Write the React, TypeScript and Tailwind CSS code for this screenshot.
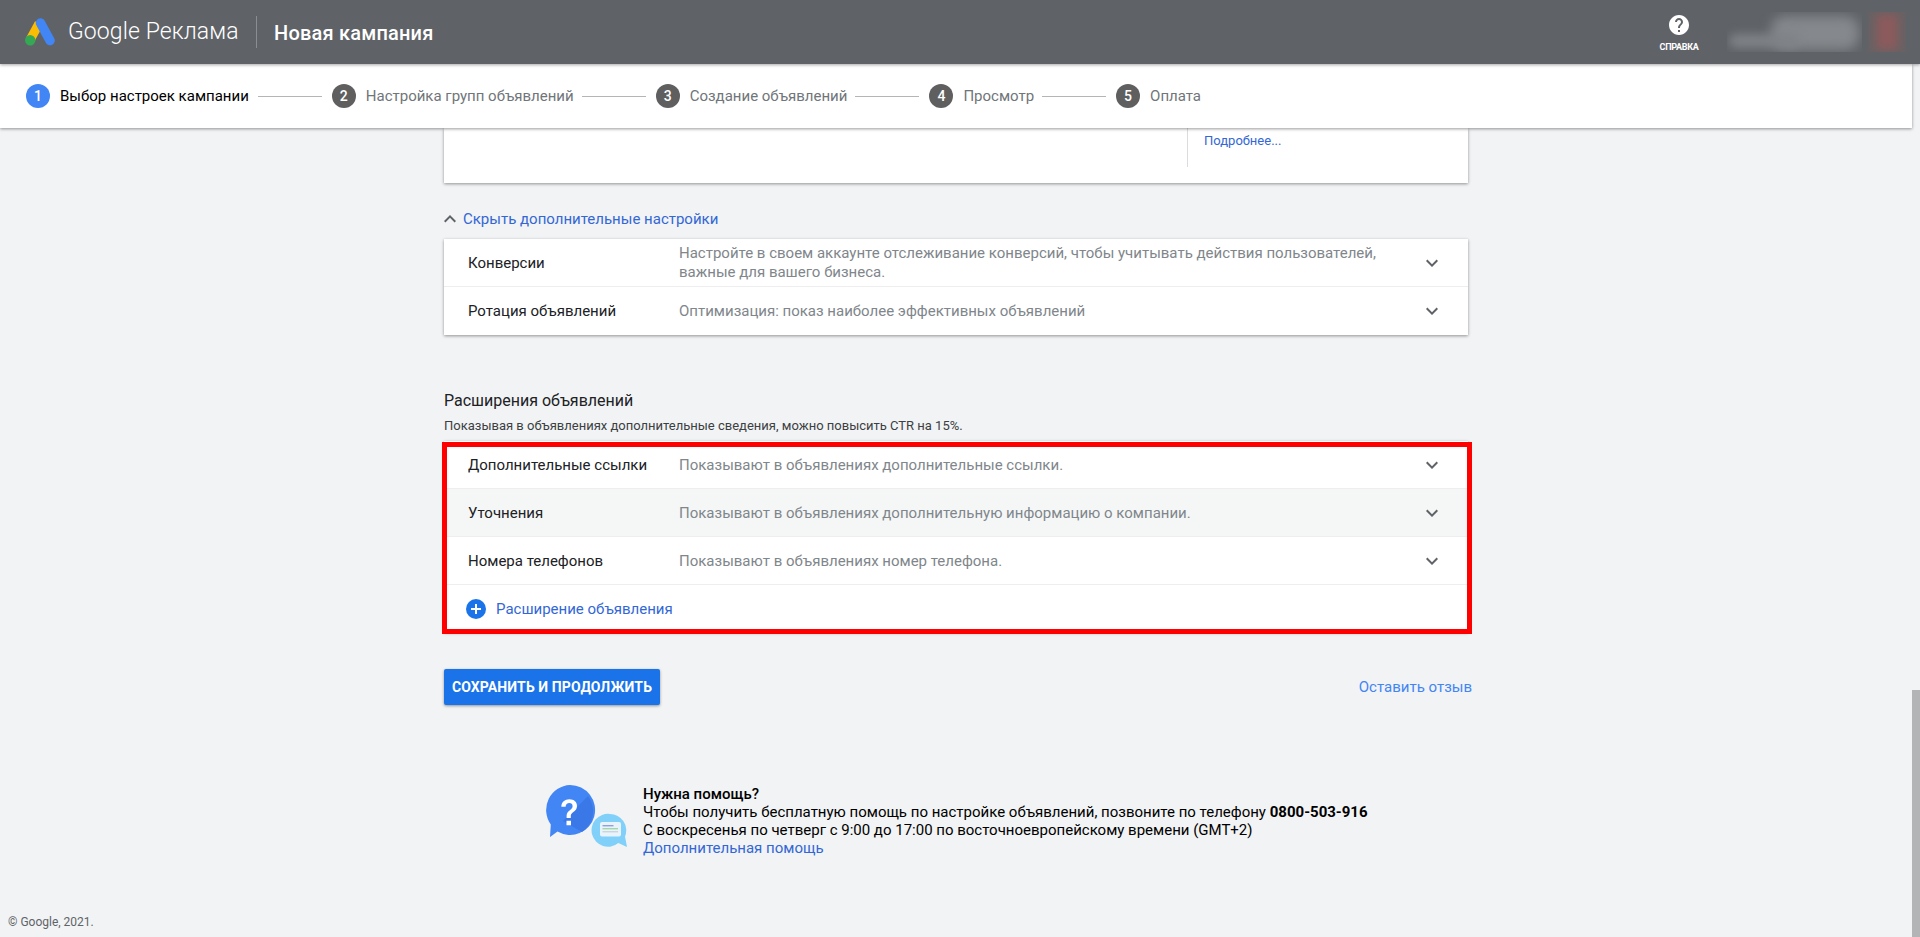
import React from "react";

const font = { fontFamily: "Roboto, 'Noto Sans', sans-serif" };

function ChevronDown() {
  return (
    <svg width="24" height="24" viewBox="0 0 24 24" className="shrink-0 fill-[#5f6368]">
      <path d="M16.59 8.59L12 13.17 7.41 8.59 6 10l6 6 6-6z" />
    </svg>
  );
}

function Row({ label, desc, hover, last }: { label: string; desc: React.ReactNode; hover?: boolean; last?: boolean }) {
  return (
    <div className={`flex h-[48px] items-center pl-6 pr-6 border-b ${last ? "border-transparent" : "border-[#eeeeee]"} ${hover ? "bg-[#f5f7f7]" : "bg-white"}`}>
      <div className="w-[211px] shrink-0 pt-px text-[15px] text-[#202124]">{label}</div>
      <div className="flex-1 pt-px text-[15px] leading-[19px] text-[#80868b]">{desc}</div>
      <ChevronDown />
    </div>
  );
}

function Step({ n, label, active, line, tight }: { n: number; label: string; active?: boolean; line?: boolean; tight?: boolean }) {
  return (
    <div className="flex items-center">
      <div className={`flex h-6 w-6 items-center justify-center rounded-full text-[14px] font-medium text-white ${active ? "bg-[#4285f4]" : "bg-[#5f5f5f]"}`}>{n}</div>
      <div className={`ml-[10px] whitespace-nowrap text-[15px] ${active ? "text-[#000000]" : "text-[#70757a]"}`}>{label}</div>
      {line && <div className={`mr-[10px] h-px w-16 bg-[#b5b5b5] ${tight ? "ml-[8px]" : "ml-[9px]"}`} />}
    </div>
  );
}

function Logo() {
  return (
    <svg width="30" height="28" viewBox="0 0 30 28" className="shrink-0">
      <path d="M14 5.5 L5 22" stroke="#fbbc04" strokeWidth="9" fill="none" />
      <path d="M15.5 5 L25 22.5" stroke="#4285f4" strokeWidth="9.5" strokeLinecap="round" fill="none" />
      <circle cx="5.2" cy="22.2" r="5.2" fill="#34a853" />
    </svg>
  );
}

function HelpArt() {
  return (
    <svg width="84" height="64" viewBox="0 0 84 64" className="shrink-0">
      <path d="M26 1a25 25 0 1 1-12.5 46.6L6 53l.8-12.5A25 25 0 0 1 26 1z" fill="#4285f4" />
      <path d="M19 37 L44 12 A25 25 0 0 1 38 48z" fill="#3b78e7" />
      <path d="M26.8 34h-4.2v-2.2c0-2.4 1-4 3.2-5.6 1.9-1.4 2.8-2.4 2.8-4 0-1.9-1.3-3.1-3.3-3.1-2.2 0-3.5 1.4-3.7 3.6h-4.3c.2-4.6 3.4-7.4 8.1-7.4 4.7 0 7.6 2.8 7.6 6.6 0 2.7-1.3 4.4-3.6 6.1-1.9 1.4-2.6 2.3-2.6 4zM22.5 36.8h4.5v4.4h-4.5z" fill="#fff" />
      <path d="M66 30a16.4 16.4 0 0 1 15 22.6l2 10.4-8.7-4A16.4 16.4 0 1 1 66 30z" fill="#81d0f9" />
      <rect x="56" y="38" width="21" height="14.5" rx="2" fill="#e8f3fb" />
      <rect x="58.5" y="41" width="11" height="1.4" fill="#8f9fe0" />
      <rect x="58.5" y="44" width="15.5" height="1.4" fill="#a3d6a8" />
      <rect x="58.5" y="47" width="15.5" height="1.4" fill="#c9d4dc" />
    </svg>
  );
}

export default function App() {
  return (
    <div className="flex h-[937px] w-[1920px] flex-col overflow-hidden bg-[#f1f3f4]" style={font}>
      <header className="relative z-20 flex h-16 shrink-0 items-center bg-[#5f6368] pl-[25px] shadow-[0_1px_3px_rgba(0,0,0,0.35)]">
        <Logo />
        <div className="ml-[13px] w-[188px] whitespace-nowrap pt-px text-[23px] font-light tracking-[0.1px] text-white">Google Реклама</div>
        <div className="h-8 w-px bg-[#8a8d91]" />
        <div className="ml-[17px] whitespace-nowrap pt-px text-[20px] font-medium tracking-[0.2px] text-white">Новая кампания</div>
        <div className="ml-auto flex w-[38px] flex-col items-center pt-[2px]">
          <svg width="24" height="24" viewBox="0 0 24 24" className="fill-white">
            <path d="M12 2C6.48 2 2 6.48 2 12s4.48 10 10 10 10-4.48 10-10S17.52 2 12 2zm1 17h-2v-2h2v2zm2.07-7.75l-.9.92C13.45 12.9 13 13.5 13 15h-2v-.5c0-1.1.45-2.1 1.17-2.83l1.24-1.26c.37-.36.59-.86.59-1.41 0-1.1-.9-2-2-2s-2 .9-2 2H8c0-2.21 1.79-4 4-4s4 1.79 4 4c0 .88-.36 1.68-.93 2.25z" />
          </svg>
          <div className="mt-[4px] whitespace-nowrap text-[9px] font-bold leading-[12px] tracking-[-0.3px] text-white">СПРАВКА</div>
        </div>
        <div className="relative ml-[29px] h-10 w-[135px] overflow-hidden">
          <div className="absolute left-[44px] top-[4px] h-[34px] w-[88px] rounded-[14px] bg-[#85888c] blur-[6px]" />
          <div className="absolute left-[2px] top-[22px] h-[14px] w-[70px] rounded-full bg-[#7f8286] blur-[5px]" />
        </div>
        <div className="ml-[6px] mr-[14px] flex h-10 w-[38px] items-center justify-center overflow-hidden bg-[#666264]">
          <div className="h-9 w-[22px] bg-[#8c5a5c] blur-[5px]" />
        </div>
      </header>

      <div className="flex min-h-0 flex-1">
        <div className="flex min-w-0 flex-1 flex-col">
          <nav className="relative z-10 flex h-16 shrink-0 items-center bg-white pl-[26px] shadow-[0_1px_3px_rgba(0,0,0,0.4)]">
            <Step n={1} label="Выбор настроек кампании" active line />
            <Step n={2} label="Настройка групп объявлений" line tight />
            <Step n={3} label="Создание объявлений" line tight />
            <Step n={4} label="Просмотр" line tight />
            <Step n={5} label="Оплата" />
          </nav>

          <main className="flex min-h-0 flex-1 flex-col">
            <div className="ml-[444px] flex w-[1024px] flex-col">
              <div className="flex h-[55px] justify-end bg-white pr-[50px] shadow-[0_1px_3px_rgba(0,0,0,0.4)]">
                <div className="h-[39px] w-[231px] border-l border-[#dadce0] pl-[16px] pt-[4px] text-[13px] leading-[18px] text-[#3367d6]">Подробнее...</div>
              </div>

              <div className="mt-[27px] flex h-[18px] items-center">
                <svg width="12" height="8" viewBox="6 8 12 8" className="fill-[#5f6368]">
                  <path d="M12 8l-6 6 1.41 1.41L12 10.83l4.59 4.58L18 14z" />
                </svg>
                <span className="ml-[7px] whitespace-nowrap text-[15px] text-[#3367d6]">Скрыть дополнительные настройки</span>
              </div>

              <div className="mt-[11px] shadow-[0_1px_3px_rgba(0,0,0,0.4)]">
                <Row label="Конверсии" desc={<>Настройте в своем аккаунте отслеживание конверсий, чтобы учитывать действия пользователей,<br />важные для вашего бизнеса.</>} />
                <Row label="Ротация объявлений" desc="Оптимизация: показ наиболее эффективных объявлений" last />
              </div>

              <div className="mt-[55px] text-[16px] leading-[22px] text-[#202124]">Расширения объявлений</div>
              <div className="mt-[5px] text-[13px] leading-[18px] text-[#3c4043]">Показывая в объявлениях дополнительные сведения, можно повысить CTR на 15%.</div>

              <div className="relative mt-[6px] bg-white shadow-[0_1px_3px_rgba(0,0,0,0.4)]">
                <Row label="Дополнительные ссылки" desc="Показывают в объявлениях дополнительные ссылки." />
                <Row label="Уточнения" desc="Показывают в объявлениях дополнительную информацию о компании." hover />
                <Row label="Номера телефонов" desc="Показывают в объявлениях номер телефона." />
                <div className="flex h-[47px] items-center pl-[22px]">
                  <svg width="20" height="20" viewBox="0 0 20 20">
                    <circle cx="10" cy="10" r="10" fill="#1a73e8" />
                    <path d="M9 5h2v4h4v2h-4v4H9v-4H5V9h4z" fill="#fff" />
                  </svg>
                  <span className="ml-[10px] pt-px text-[15px] text-[#3367d6]">Расширение объявления</span>
                </div>
                <div className="absolute -left-[2px] -right-[4px] top-[1px] -bottom-[2px] border-[5px] border-[#ff0000]" />
              </div>

              <div className="mt-[37px] flex items-center justify-between">
                <button className="h-9 w-[216px] rounded-[2px] bg-[#1a73e8] text-[14px] font-bold uppercase tracking-[0.1px] text-white shadow-[0_1px_3px_rgba(0,0,0,0.4)]">Сохранить и продолжить</button>
                <a className="-mr-[4px] text-[15px] text-[#4285f4]">Оставить отзыв</a>
              </div>
            </div>

            <div className="ml-[544px] mt-[79px] flex w-[900px] items-start">
              <HelpArt />
              <div className="ml-[15px] mt-[1px] text-[15px] leading-[18px] text-[#202124]">
                <div className="font-medium text-black">Нужна помощь?</div>
                <div className="whitespace-nowrap text-black">Чтобы получить бесплатную помощь по настройке объявлений, позвоните по телефону <b className="font-bold">0800-503-916</b></div>
                <div className="text-black">С воскресенья по четверг с 9:00 до 17:00 по восточноевропейскому времени (GMT+2)</div>
                <div className="text-[#3367d6]">Дополнительная помощь</div>
              </div>
            </div>

            <div className="mt-auto pb-[6px] pl-2 text-[12px] leading-[18px] text-[#5f6368]">© Google, 2021.</div>
          </main>
        </div>
        <aside className="flex w-2 shrink-0 flex-col justify-end">
          <div className="h-[247px] bg-[#b3b4b6]" />
        </aside>
      </div>
    </div>
  );
}
